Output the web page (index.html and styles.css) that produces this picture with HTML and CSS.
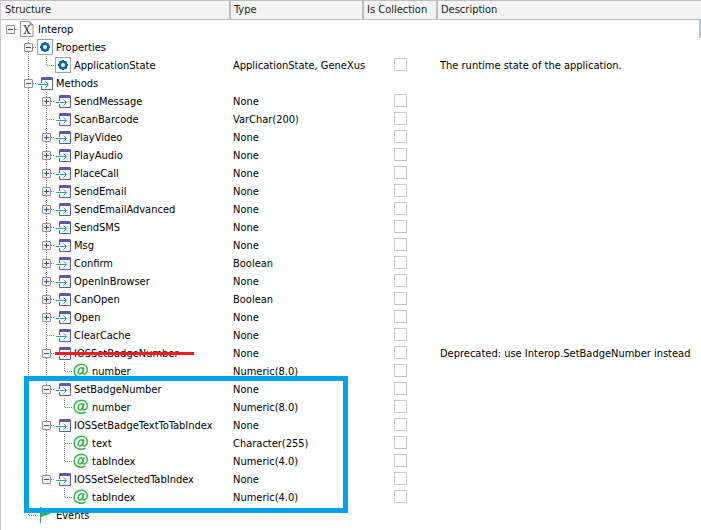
FILE: index.html
```html
<!DOCTYPE html>
<html lang="en">
<head>
<meta charset="utf-8">
<title>Interop</title>
<link rel="stylesheet" href="styles.css">
</head>
<body>
<svg class="defs" aria-hidden="true">
  <symbol id="v" viewBox="0 0 18 18"><path class="dots" d="M9.5 0V18"/></symbol>
  <symbol id="t" viewBox="0 0 18 18"><path class="dots" d="M9.5 0V18M10 9.5H18"/></symbol>
  <symbol id="l" viewBox="0 0 18 18"><path class="dots" d="M9.5 0V10M10 9.5H18"/></symbol>
  <symbol id="r" viewBox="0 0 18 18"><path class="dots" d="M10 9.5H18"/></symbol>
  <symbol id="minus" viewBox="0 0 18 18"><rect class="knob" x="5.5" y="5.5" width="8" height="8" rx=".5"/><path class="sign" d="M7 9.5H12"/></symbol>
  <symbol id="plus" viewBox="0 0 18 18"><rect class="knob" x="5.5" y="5.5" width="8" height="8" rx=".5"/><path class="sign" d="M7 9.5H12M9.5 7V12"/></symbol>
  <symbol id="doc" viewBox="0 0 18 18"><path fill="#fff" stroke="#949494" d="M1.500 1.500H10.500L14 5V16.500H1.500Z"/><path fill="#949494" d="M10.500 1.500V5.500H14Z"/><path fill="none" stroke="#555" d="M4.500 5.500H7M9 5.500H11M4.500 13.500H7M8.500 13.500H11.500M10 5.500L5.500 13.500"/><path fill="none" stroke="#444" stroke-width="1.400" d="M5.800 5.500L10 13.500"/></symbol>
  <symbol id="gear" viewBox="0 0 18 18"><rect x=".5" y="1.500" width="15" height="15" fill="#fff" stroke="#98a4ae"/><circle cx="8" cy="9" r="3.300" fill="none" stroke="#0868a4" stroke-width="2.600"/><path stroke="#0868a4" stroke-width="2.200" d="M8 4V6M8 12V14M3 9H5M11 9H13M4.500 5.500L5.800 6.800M10.200 11.200L11.500 12.500M4.500 12.500L5.800 11.200M10.200 6.800L11.500 5.500"/></symbol>
  <symbol id="method" viewBox="0 0 18 18"><path fill="#fff" stroke="#5c58a6" d="M4.500 4.500H15.500V15.500H4.500Z"/><path fill="#5c58a6" d="M5 3H15L16 4V6H4V4Z"/><path stroke="#fff" stroke-width="3" d="M4 10.500H6"/><path fill="none" stroke="#18aaa0" d="M1 10.500H11M8.500 7.500L11.500 10.500L8.500 13.500"/></symbol>
  <symbol id="at" viewBox="0 0 18 18"><g fill="none" stroke="#35b54a" stroke-width="1.500"><path d="M12.500 13.800C8.500 16.800 1.200 15 1.200 9.200C1.200 5 4.500 2.200 8.500 2.200C12 2.200 14.300 4.500 14.300 7.500C14.300 10.200 12.500 12 10.800 12C9.500 12 9.500 11 9.800 10L11 5.500"/><path d="M10.300 7.500C9.800 5 6.800 5.500 5.600 7.800C4.400 10.500 5.500 12.300 7.200 12C8.700 11.700 9.700 10 10.300 7.500Z"/></g></symbol>
  <symbol id="flag" viewBox="0 0 18 18"><path fill="#2eb14a" d="M3 1H4V2C8 1 11 5 15 6.500C11 9.500 7 9 4 11.500V17H3Z"/></symbol>
</svg>
<main class="panel">
  <table class="grid">
    <colgroup><col class="c-structure"><col class="c-type"><col class="c-coll"><col></colgroup>
    <thead><tr><th>Structure</th><th>Type</th><th>Is Collection</th><th>Description</th></tr></thead>
    <tbody id="rows"></tbody>
  </table>
  <div class="strike"></div>
  <div class="highlight"></div>
  <div class="thumb"></div>
</main>
<script src="tree.js"></script>
</body>
</html>
```
FILE: styles.css
```css
* { box-sizing: border-box; }
body {
  margin: 0;
  background: #fff;
  color: #000;
  font: 11px/18px "DejaVu Sans Condensed", "DejaVu Sans", sans-serif;
}
.defs { position: absolute; width: 0; height: 0; }
.panel {
  position: relative;
  min-height: 100vh;
  border-left: 1px solid #c8c8c8;
  overflow: hidden;
}
.grid { width: 100%; table-layout: fixed; border-collapse: separate; border-spacing: 0; }
.c-structure { width: 228px; }
.c-type { width: 133px; }
.c-coll { width: 74px; }
th {
  height: 20px;
  padding: 0 0 0 3px;
  border: solid #bebebe;
  border-width: 1px 0 1px 2px;
  background: #f4f4f4;
  color: #1a1a1a;
  font-weight: normal;
  text-align: left;
  white-space: nowrap;
}
th:first-child { border-left: 0; padding-left: 4px; }
td { height: 18px; padding: 0 0 0 4px; line-height: 16px; padding-top: 2px; white-space: nowrap; }
td:first-child { padding: 0; }
.node { display: flex; height: 18px; }
.node svg { flex: none; width: 18px; height: 18px; }
.label { padding: 2px 0 0 1px; }
td.coll { padding: 0 0 1px 3px; }
.check {
  appearance: none;
  display: block;
  width: 13px;
  height: 13px;
  margin: 0 auto;
  border: 1px solid #c8c8c8;
  background: #fff;
}
td .check { margin-left: 29px; }
.dots { fill: none; stroke: #808080; stroke-dasharray: 1 1; }
.knob { fill: #f4f4f4; stroke: #919191; }
.sign { stroke: #3c50a0; }
.strike { position: absolute; left: 54px; top: 352px; width: 139px; height: 3px; background: #ed1c24; }
.highlight { position: absolute; left: 23px; top: 376px; width: 324px; height: 137px; border: 5px solid #00a2e8; }
.thumb { position: absolute; right: 0; top: 20px; width: 2px; height: 18px; background: #b9c8d8; }
```
FILE: tree.js
```js
// guides: one letter per 18px column, "." blank, v/t/l/r line shapes, + and - expanders
const rows = [
  ["-r", "doc", "Interop"],
  [".-t", "gear", "Properties"],
  [".vl", "gear", "ApplicationState", "ApplicationState, GeneXus", "The runtime state of the application."],
  [".-t", "method", "Methods"],
  [".v+t", "method", "SendMessage", "None"],
  [".vt", "method", "ScanBarcode", "VarChar(200)"],
  [".v+t", "method", "PlayVideo", "None"],
  [".v+t", "method", "PlayAudio", "None"],
  [".v+t", "method", "PlaceCall", "None"],
  [".v+t", "method", "SendEmail", "None"],
  [".v+t", "method", "SendEmailAdvanced", "None"],
  [".v+t", "method", "SendSMS", "None"],
  [".v+t", "method", "Msg", "None"],
  [".v+t", "method", "Confirm", "Boolean"],
  [".v+t", "method", "OpenInBrowser", "None"],
  [".v+t", "method", "CanOpen", "Boolean"],
  [".v+t", "method", "Open", "None"],
  [".vt", "method", "ClearCache", "None"],
  [".v-t", "method", "IOSSetBadgeNumber", "None", "Deprecated: use Interop.SetBadgeNumber instead"],
  [".vvl", "at", "number", "Numeric(8.0)"],
  [".v-t", "method", "SetBadgeNumber", "None"],
  [".vvl", "at", "number", "Numeric(8.0)"],
  [".v-t", "method", "IOSSetBadgeTextToTabIndex", "None"],
  [".vvt", "at", "text", "Character(255)"],
  [".vvl", "at", "tabIndex", "Numeric(4.0)"],
  [".v-l", "method", "IOSSetSelectedTabIndex", "None"],
  [".v.l", "at", "tabIndex", "Numeric(4.0)"],
  [".l", "flag", "Events"]
];

const use = id => `<use href="#${id}"/>`;
const svg = inner => `<svg viewBox="0 0 18 18" aria-hidden="true">${inner}</svg>`;

// an expander sign is drawn over the line shape that follows it
const guides = text => text.replace(/([+-]?)([.vtlr])/g, (m, sign, line) =>
  svg((line === "." ? "" : use(line)) + (sign ? use(sign === "+" ? "plus" : "minus") : "")));

document.getElementById("rows").innerHTML = rows.map(([guide, icon, name, type = "", desc = ""]) => `
  <tr>
    <td><div class="node">${guides(guide)}${svg(use(icon))}<span class="label">${name}</span></div></td>
    <td>${type}</td>
    <td class="coll">${type ? `<input class="check" type="checkbox" aria-label="${name} is collection">` : ""}</td>
    <td>${desc}</td>
  </tr>`).join("");
```
